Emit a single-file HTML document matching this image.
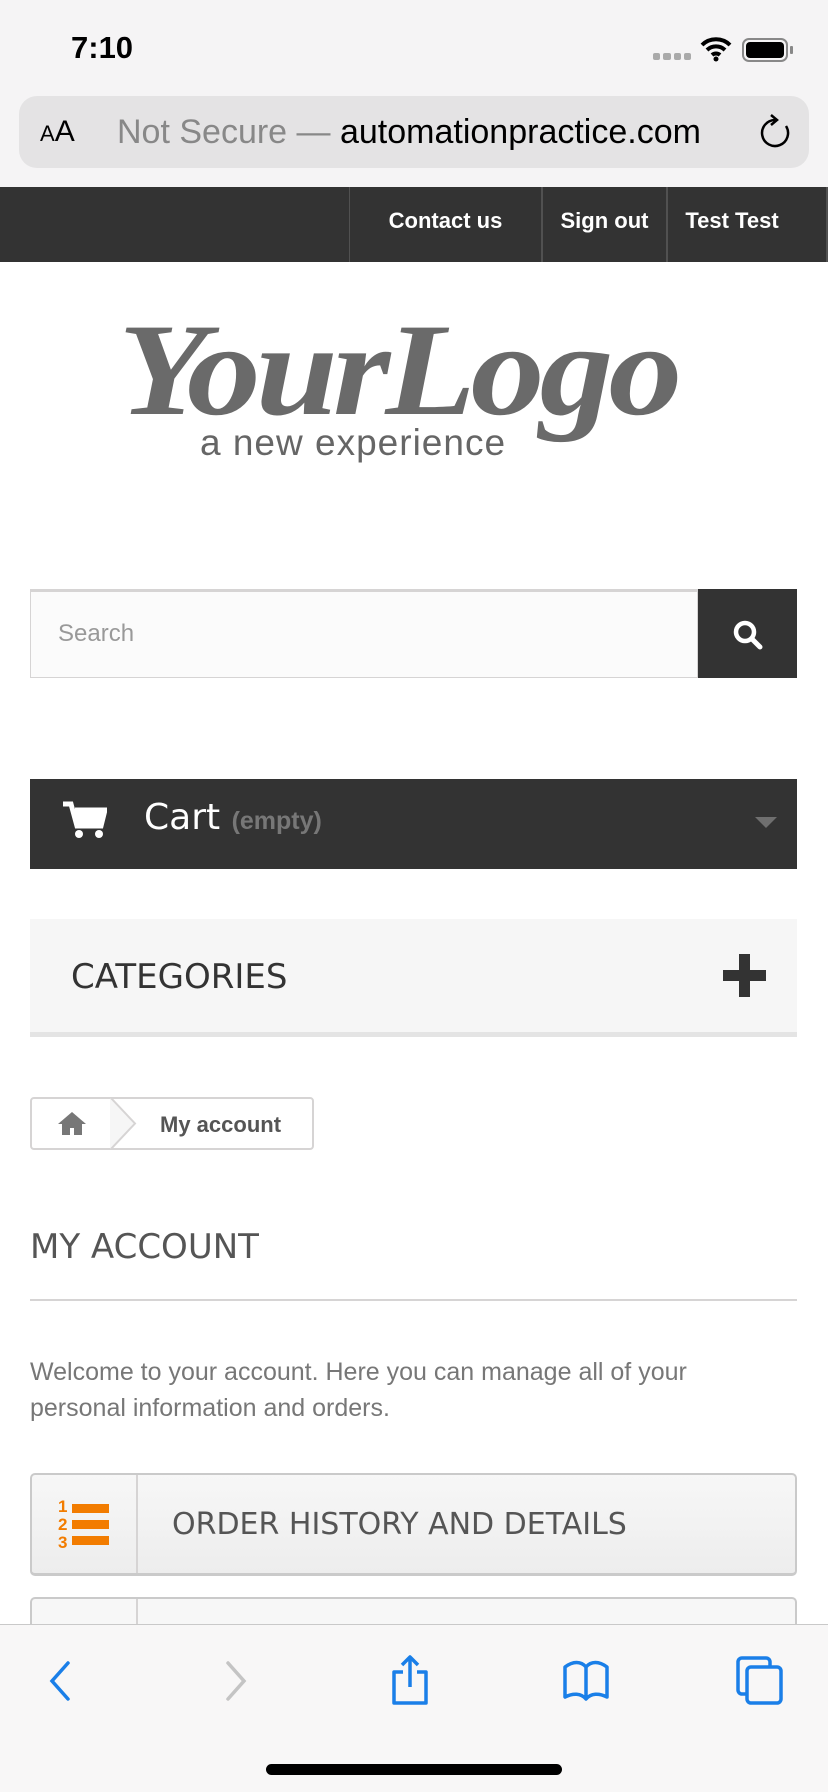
<!DOCTYPE html>
<html><head><meta charset="utf-8"><style>
*{margin:0;padding:0;box-sizing:border-box}
body{width:828px;height:1792px;overflow:hidden;background:#fff;font-family:"Liberation Sans",sans-serif;position:relative}
.a{position:absolute}
</style></head><body>
<div class="a" style="left:0;top:0;width:828px;height:187px;background:#f5f4f5"></div>
<div class="a" style="left:71px;top:30px;font-size:31px;font-weight:600;color:#000">7:10</div>
<div class="a" style="left:653px;top:53px;width:38px;height:7px;display:flex;gap:3px"><i style="flex:1;background:#aaa;border-radius:2px"></i><i style="flex:1;background:#aaa;border-radius:2px"></i><i style="flex:1;background:#aaa;border-radius:2px"></i><i style="flex:1;background:#aaa;border-radius:2px"></i></div>
<svg class="a" style="left:699px;top:36px" width="34" height="26" viewBox="0 0 34 26"><path d="M3 9a20 20 0 0 1 28 0M8 14a13 13 0 0 1 18 0M13 19a6 6 0 0 1 8 0" stroke="#000" stroke-width="4" fill="none"/><circle cx="17" cy="23" r="2.5"/></svg>
<div class="a" style="left:742px;top:38px;width:46px;height:24px;border:2px solid #888;border-radius:7px;padding:2px"><div style="width:100%;height:100%;background:#000;border-radius:4px"></div></div>
<div class="a" style="left:790px;top:46px;width:3px;height:8px;background:#888;border-radius:1px"></div>
<div class="a" style="left:19px;top:96px;width:790px;height:72px;background:#e4e3e4;border-radius:18px"></div>
<div class="a" style="left:40px;top:115px;font-size:30px;color:#000"><span style="font-size:22px">A</span>A</div>
<div class="a" style="left:117px;top:113px;font-size:34px;color:#888;white-space:nowrap">Not Secure — <span style="color:#000">automationpractice.com</span></div>
<svg class="a" style="left:758px;top:114px" width="34" height="38" viewBox="0 0 34 38"><path d="M17 6a13 13 0 1 0 11 6" stroke="#000" stroke-width="2.5" fill="none"/><path d="M13 1l6 5-6 5" stroke="#000" stroke-width="2.5" fill="none"/></svg>
<div class="a" style="left:0;top:187px;width:828px;height:75px;background:#333"></div>
<div class="a" style="left:349px;top:187px;width:1px;height:75px;background:#515151"></div>
<div class="a" style="left:541px;top:187px;width:2px;height:75px;background:#515151"></div>
<div class="a" style="left:666px;top:187px;width:2px;height:75px;background:#515151"></div>
<div class="a" style="left:826px;top:187px;width:2px;height:75px;background:#515151"></div>
<div class="a" style="left:350px;top:208px;width:191px;text-align:center;color:#fff;font-weight:bold;font-size:22px">Contact us</div>
<div class="a" style="left:543px;top:208px;width:123px;text-align:center;color:#fff;font-weight:bold;font-size:22px">Sign out</div>
<div class="a" style="left:668px;top:208px;width:128px;text-align:center;color:#fff;font-weight:bold;font-size:22px">Test Test</div>
<div class="a" style="left:118px;top:304px;font-family:'Liberation Serif',serif;font-style:italic;font-weight:bold;font-size:120px;color:#6a6a6a;letter-spacing:-4px;line-height:1;transform:scale(1.23,1.1);transform-origin:left top">YourLogo</div>
<div class="a" style="left:200px;top:424px;font-size:37px;color:#666;line-height:1;letter-spacing:1px">a new experience</div>
<div class="a" style="left:30px;top:589px;width:668px;height:89px;border:1px solid #d6d4d4;border-top:3px solid #d6d4d4;background:#fbfbfb"></div>
<div class="a" style="left:58px;top:620px;font-size:24px;color:#999">Search</div>
<div class="a" style="left:698px;top:589px;width:99px;height:89px;background:#333"></div>
<svg class="a" style="left:731px;top:618px" width="34" height="34" viewBox="0 0 34 34"><circle cx="14" cy="14" r="9" stroke="#fff" stroke-width="4.5" fill="none"/><path d="M21 21l8 8" stroke="#fff" stroke-width="5" stroke-linecap="round"/></svg>
<div class="a" style="left:30px;top:779px;width:767px;height:90px;background:#333"></div>
<svg class="a" style="left:63px;top:800px" width="44" height="40" viewBox="0 0 44 40"><path d="M0 4h8l6 22h24l4-16H12" stroke="#fff" stroke-width="5" fill="none"/><rect x="12" y="10" width="28" height="14" fill="#fff"/><circle cx="16" cy="34" r="4" fill="#fff"/><circle cx="36" cy="34" r="4" fill="#fff"/></svg>
<div class="a" style="left:144px;top:797px;font-size:36px;color:#fff;font-family:'DejaVu Sans',sans-serif">Cart <span style="font-size:25px;color:#777;font-weight:bold;font-family:'Liberation Sans'">(empty)</span></div>
<div class="a" style="left:755px;top:817px;border-left:11px solid transparent;border-right:11px solid transparent;border-top:11px solid #6f6f6f"></div>
<div class="a" style="left:30px;top:919px;width:767px;height:118px;background:#f6f6f6;border-bottom:5px solid #e4e4e4"></div>
<div class="a" style="left:71px;top:957px;font-size:34px;color:#333;font-family:'DejaVu Sans',sans-serif">CATEGORIES</div>
<div class="a" style="left:723px;top:970px;width:43px;height:11px;background:#333"></div>
<div class="a" style="left:739px;top:954px;width:11px;height:43px;background:#333"></div>
<div class="a" style="left:30px;top:1097px;width:284px;height:53px;border:2px solid #d6d4d4;border-radius:4px;background:#fff"></div>
<svg class="a" style="left:108px;top:1097px" width="30" height="53" viewBox="0 0 30 53"><path d="M2 0l25 26.5L2 53" stroke="#d6d4d4" stroke-width="2" fill="#f6f6f6"/></svg>
<svg class="a" style="left:56px;top:1110px" width="32" height="26" viewBox="0 0 32 26"><path d="M16 2L2 14h4v11h8v-7h4v7h8V14h4z" fill="#777"/></svg>
<div class="a" style="left:160px;top:1112px;font-size:22px;font-weight:bold;color:#555">My account</div>
<div class="a" style="left:30px;top:1227px;font-size:34px;color:#555;font-family:'DejaVu Sans',sans-serif">MY ACCOUNT</div>
<div class="a" style="left:30px;top:1299px;width:767px;height:2px;background:#d6d4d4"></div>
<div class="a" style="left:30px;top:1354px;width:700px;font-size:25px;line-height:36px;color:#777">Welcome to your account. Here you can manage all of your personal information and orders.</div>
<div class="a" style="left:30px;top:1473px;width:767px;height:103px;border:2px solid #cacaca;border-bottom-width:3px;border-radius:5px;background:linear-gradient(#f7f7f7,#ededed)"></div>
<div class="a" style="left:136px;top:1475px;width:2px;height:98px;background:#d6d4d4"></div>
<div class="a" style="left:58px;top:1498px;color:#f27c00;font-weight:bold;font-size:17px;line-height:18px">1<br>2<br>3</div>
<div class="a" style="left:72px;top:1504px;width:37px;height:9px;background:#f27c00"></div>
<div class="a" style="left:72px;top:1520px;width:37px;height:9px;background:#f27c00"></div>
<div class="a" style="left:72px;top:1536px;width:37px;height:9px;background:#f27c00"></div>
<div class="a" style="left:172px;top:1507px;font-size:30px;color:#555;font-family:'DejaVu Sans',sans-serif">ORDER HISTORY AND DETAILS</div>
<div class="a" style="left:30px;top:1597px;width:767px;height:60px;border:2px solid #cacaca;border-radius:5px;background:#f7f7f7"></div>
<div class="a" style="left:136px;top:1599px;width:2px;height:40px;background:#d6d4d4"></div>
<div class="a" style="left:0;top:1624px;width:828px;height:168px;background:#f8f7f7;border-top:1px solid #c9c9c9"></div>
<svg class="a" style="left:46px;top:1660px" width="30" height="42" viewBox="0 0 30 42"><path d="M22 3L6 21l16 18" stroke="#1a7fe8" stroke-width="3.5" fill="none" stroke-linecap="round"/></svg>
<svg class="a" style="left:220px;top:1660px" width="30" height="42" viewBox="0 0 30 42"><path d="M8 3l16 18L8 39" stroke="#c4c4c4" stroke-width="3.5" fill="none" stroke-linecap="round"/></svg>
<svg class="a" style="left:388px;top:1654px" width="44" height="52" viewBox="0 0 44 52"><path d="M15 18H6v31h32V18h-9M22 3v30M14 11l8-8 8 8" stroke="#1a7fe8" stroke-width="3.5" fill="none" stroke-linejoin="round"/></svg>
<svg class="a" style="left:562px;top:1659px" width="48" height="42" viewBox="0 0 48 42"><path d="M3 38V8c8-6 16-6 21 0 5-6 13-6 21 0v30c-8-4-16-4-21 2-5-6-13-6-21-2zM24 8v32" stroke="#1a7fe8" stroke-width="3.5" fill="none" stroke-linejoin="round"/></svg>
<svg class="a" style="left:735px;top:1655px" width="50" height="50" viewBox="0 0 50 50"><rect x="3" y="3" width="32" height="36" rx="4" stroke="#1a7fe8" stroke-width="3.5" fill="none"/><rect x="12" y="12" width="34" height="36" rx="4" stroke="#1a7fe8" stroke-width="3.5" fill="#f8f7f7"/></svg>
<div class="a" style="left:266px;top:1764px;width:296px;height:11px;background:#000;border-radius:6px"></div>
</body></html>
